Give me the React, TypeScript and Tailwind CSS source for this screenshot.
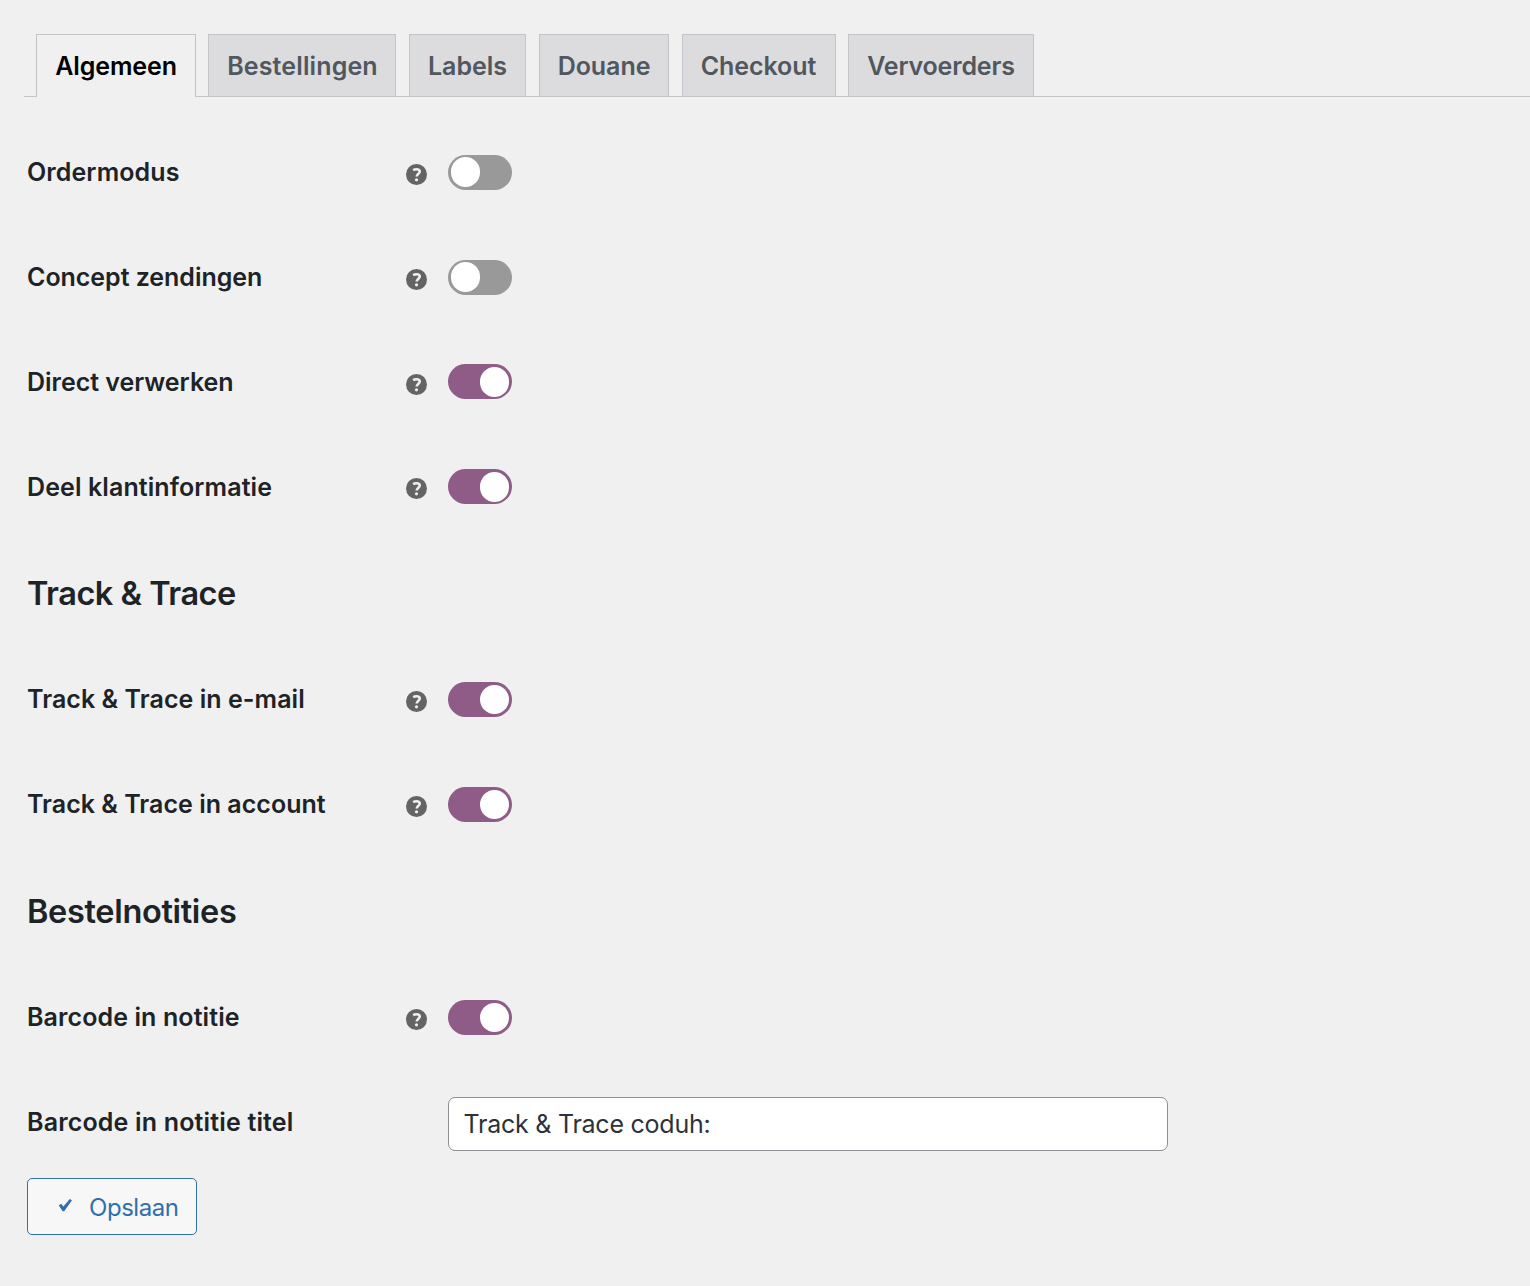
import React, { useState } from 'react';
import clsx from 'clsx';

const tabs = [
  { label: 'Algemeen', className: 'w-[160px] tracking-[-0.1px]' },
  { label: 'Bestellingen', className: 'ml-[12px] w-[188px] pl-px tracking-[0.12px]' },
  { label: 'Labels', className: 'ml-[13px] w-[117px]' },
  { label: 'Douane', className: 'ml-[13px] w-[130px] tracking-[-0.05px]' },
  { label: 'Checkout', className: 'ml-[13px] w-[154px] pr-px tracking-[-0.08px]' },
  { label: 'Vervoerders', className: 'ml-[12px] w-[186px] tracking-[-0.17px]' },
];

function HelpIcon() {
  return (
    <svg viewBox="0.4 0.4 21.2 21.2" className="mt-[3.6px] size-[21px]" aria-hidden="true">
      <circle cx="11" cy="11" r="10.6" fill="#646464" />
      <path
        d="M7.6 6.6c1-.6 2.2-.9 3.4-.9 2.2 0 3.3.9 3.3 2.3 0 2.1-3.1 2.3-3.1 5.1"
        fill="none"
        stroke="#f0f0f0"
        strokeWidth="2.6"
      />
      <circle cx="11" cy="16.4" r="1.6" fill="#f0f0f0" />
    </svg>
  );
}

function Toggle({ initial, label }: { initial: boolean; label: string }) {
  const [on, setOn] = useState(initial);
  return (
    <button
      type="button"
      role="switch"
      aria-checked={on}
      aria-label={label}
      onClick={() => setOn(!on)}
      className={clsx(
        'flex h-[35px] w-16 items-center rounded-full px-[2.7px]',
        on ? 'justify-end bg-[#8f5c87]' : 'justify-start bg-[#999999]',
      )}
    >
      <span className="size-[29.4px] rounded-full bg-white" />
    </button>
  );
}

function SettingRow({ label, className, on }: { label: string; className?: string; on: boolean }) {
  return (
    <div className="flex h-[104.9px] items-center">
      <div className={clsx('w-[379px] text-[25px] font-semibold text-[#1d2327]', className)}>{label}</div>
      <HelpIcon />
      <div className="-mt-[0.6px] ml-[21px]">
        <Toggle initial={on} label={label} />
      </div>
    </div>
  );
}

function Heading({ children, className }: { children: string; className: string }) {
  return (
    <h2 className={clsx('flex h-[108px] items-center pt-[2px] text-[32.5px] font-semibold text-[#1d2327]', className)}>
      {children}
    </h2>
  );
}

export default function App() {
  const [active, setActive] = useState('Algemeen');
  const [title, setTitle] = useState('Track & Trace coduh:');
  return (
    <div className="min-h-[1286px] bg-[#f0f0f0] pt-[34px] font-['Inter',sans-serif]">
      <nav className="ml-6 flex h-[63px] border-b border-[#c3c4c7] pl-3">
        {tabs.map((tab) => (
          <button
            key={tab.label}
            type="button"
            onClick={() => setActive(tab.label)}
            className={clsx(
              'border border-b-0 border-[#c3c4c7] pt-[2px] text-center text-[25px] font-semibold',
              active === tab.label ? 'h-[63px] bg-[#f0f0f0] text-black' : 'h-[62px] bg-[#dcdcde] text-[#50575e]',
              tab.className,
            )}
          >
            {tab.label}
          </button>
        ))}
      </nav>
      <main className="pt-[23px] pl-[27px]">
        <SettingRow label="Ordermodus" className="pt-[0.6px] tracking-[0.1px]" on={false} />
        <SettingRow label="Concept zendingen" className="pt-[0.6px] tracking-[-0.04px]" on={false} />
        <SettingRow label="Direct verwerken" className="pt-[0.8px] tracking-[-0.03px]" on />
        <SettingRow label="Deel klantinformatie" className="pt-[1px] tracking-[0.1px]" on />
        <Heading className="tracking-[-0.5px]">Track &amp; Trace</Heading>
        <SettingRow label="Track & Trace in e-mail" className="tracking-[0.06px]" on />
        <SettingRow label="Track & Trace in account" className="tracking-[0.02px]" on />
        <Heading className="tracking-[-0.33px]">Bestelnotities</Heading>
        <SettingRow label="Barcode in notitie" className="tracking-[0.1px]" on />
        <div className="flex h-[104.9px] items-center">
          <label
            htmlFor="barcode-title"
            className="w-[421px] text-[25px] font-semibold tracking-[0.17px] text-[#1d2327]"
          >
            Barcode in notitie titel
          </label>
          <input
            id="barcode-title"
            value={title}
            onChange={(e) => setTitle(e.target.value)}
            className="mt-[3px] h-[54px] w-[720px] rounded-[7px] border border-[#8c8f94] bg-white px-[14.5px] text-[25px] tracking-[-0.24px] text-[#2c3338]"
          />
        </div>
        <button
          type="button"
          className="mt-[3px] flex h-[57px] w-[170px] items-center rounded-[5px] border border-[#2f6fae] bg-[#f7f7f7] pl-[30px] text-[24px] tracking-[-0.45px] text-[#2f6fae]"
        >
          <svg viewBox="0 0 15 14" className="mb-[3px] h-[14px] w-[15px]" aria-hidden="true">
            <path d="M.8 7.6 3.1 5.8 5.4 8.4 11.8 1 14 2.2 6.2 13.3 4.7 13.3Z" fill="currentColor" />
          </svg>
          <span className="ml-[16px] pt-[3px]">Opslaan</span>
        </button>
      </main>
    </div>
  );
}
